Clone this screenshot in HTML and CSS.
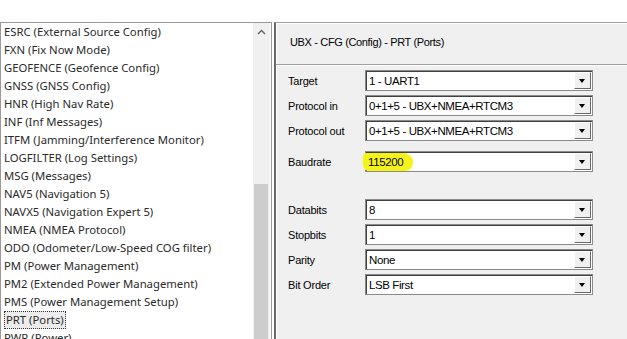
FILE: index.html
```html
<!DOCTYPE html>
<html lang="en">
<head>
  <meta charset="UTF-8" />
  <title>u-center - UBX CFG PRT</title>
  <link rel="stylesheet" href="styles.css">
</head>
<body>
  <div class="app">
    <div class="msglist">
      <ul class="items">
        <li>ESRC (External Source Config)</li>
        <li>FXN (Fix Now Mode)</li>
        <li>GEOFENCE (Geofence Config)</li>
        <li>GNSS (GNSS Config)</li>
        <li>HNR (High Nav Rate)</li>
        <li>INF (Inf Messages)</li>
        <li>ITFM (Jamming/Interference Monitor)</li>
        <li>LOGFILTER (Log Settings)</li>
        <li>MSG (Messages)</li>
        <li>NAV5 (Navigation 5)</li>
        <li>NAVX5 (Navigation Expert 5)</li>
        <li>NMEA (NMEA Protocol)</li>
        <li>ODO (Odometer/Low-Speed COG filter)</li>
        <li>PM (Power Management)</li>
        <li>PM2 (Extended Power Management)</li>
        <li>PMS (Power Management Setup)</li>
        <li><span class="selected">PRT (Ports)</span></li>
        <li>PWR (Power)</li>
      </ul>
      <div class="scrollbar">
        <div class="arrow-up">
          <svg width="9" height="6" viewBox="0 0 9 6"><polyline points="1,5 4.5,1.5 8,5" fill="none" stroke="#606060" stroke-width="1.4"/></svg>
        </div>
        <div class="thumb"></div>
      </div>
    </div>

    <div class="panel">
      <div class="panel-title">UBX - CFG (Config) - PRT (Ports)</div>
      <div class="form">
        <div class="row">
          <label>Target</label>
          <div class="combo"><span class="value">1 - UART1</span><span class="drop"></span></div>
        </div>
        <div class="row">
          <label>Protocol in</label>
          <div class="combo"><span class="value">0+1+5 - UBX+NMEA+RTCM3</span><span class="drop"></span></div>
        </div>
        <div class="row">
          <label>Protocol out</label>
          <div class="combo"><span class="value">0+1+5 - UBX+NMEA+RTCM3</span><span class="drop"></span></div>
        </div>
        <div class="row baud">
          <label>Baudrate</label>
          <div class="combo"><span class="value"><span class="marker">115200</span></span><span class="drop"></span></div>
        </div>
        <div class="row databits">
          <label>Databits</label>
          <div class="combo"><span class="value">8</span><span class="drop"></span></div>
        </div>
        <div class="row">
          <label>Stopbits</label>
          <div class="combo"><span class="value">1</span><span class="drop"></span></div>
        </div>
        <div class="row">
          <label>Parity</label>
          <div class="combo"><span class="value">None</span><span class="drop"></span></div>
        </div>
        <div class="row">
          <label>Bit Order</label>
          <div class="combo"><span class="value">LSB First</span><span class="drop"></span></div>
        </div>
      </div>
    </div>
  </div>
</body>
</html>
```

FILE: styles.css
```css
* {
  margin: 0;
  padding: 0;
  box-sizing: border-box;
}

html, body {
  width: 627px;
  height: 339px;
  overflow: hidden;
  background-color: #ffffff;
}

.app {
  display: flex;
  padding-top: 22px;
  height: 100%;
  overflow: hidden;
}

/* left message list */
.msglist {
  width: 272px;
  height: 317px;
  display: flex;
  border: 1px solid #9a9a9a;
  border-bottom: none;
  background: #ffffff;
  overflow: hidden;
}

.items {
  list-style: none;
  flex: 1;
  padding-left: 3px;
  font-family: "Noto Sans", sans-serif;
  font-size: 11.3px;
  color: #2a2a2a;
}

.items li {
  height: 18px;
  line-height: 18px;
  white-space: nowrap;
}

.items .selected {
  display: inline-block;
  height: 18px;
  padding: 0 1px;
  background: #ececec;
  border: 1px dotted #333;
  line-height: 16px;
}

.scrollbar {
  width: 17px;
  margin-right: 1px;
  background: #f0f0f0;
  display: flex;
  flex-direction: column;
}

.arrow-up {
  height: 17px;
  display: flex;
  justify-content: center;
  align-items: center;
}

.thumb {
  margin-top: 144px;
  margin-left: 1px;
  margin-right: 2px;
  flex: 1;
  background: #cdcdcd;
}

/* right config panel */
.panel {
  flex: 1;
  margin-left: 2px;
  height: 317px;
  background: #f0f0f0;
  border-top: 1px solid #a0a0a0;
  border-left: 2px solid #6a6a6a;
  box-shadow: inset 1px 1px 0 #ffffff;
  font-family: "Liberation Sans", Arial, sans-serif;
  font-size: 11px;
  color: #000;
}

.panel-title {
  height: 42px;
  padding: 13px 0 0 14px;
  border-bottom: 1px solid #a0a0a0;
  box-shadow: 0 1px 0 #ffffff;
  letter-spacing: -0.35px;
}

.form {
  padding: 5px 0 0 11px;
  display: flex;
  flex-direction: column;
  gap: 4px;
}

.row {
  display: flex;
  align-items: center;
  height: 21px;
}

.row.baud {
  margin-top: 6px;
}

.row.databits {
  margin-top: 23px;
}

.row label {
  width: 78px;
  padding-left: 1px;
  letter-spacing: -0.2px;
}

.combo {
  width: 228px;
  height: 21px;
  display: flex;
  align-items: center;
  background: #ffffff;
  border: 1px solid #8a8a8a;
  box-shadow: inset 1px 1px 0 #404040;
}

.combo .value {
  flex: 1;
  padding-left: 3px;
  font-size: 11.5px;
  letter-spacing: -0.4px;
  white-space: nowrap;
}

.marker {
  display: inline-block;
  margin-left: -6px;
  padding: 3px 10px 3px 5px;
  background: #f4f41c;
  border-radius: 4px 9px 8px 6px;
}

.drop {
  width: 17px;
  height: 17px;
  margin-right: 1px;
  background: #f0f0f0;
  border: 1px solid;
  border-color: #ffffff #6a6a6a #6a6a6a #ffffff;
  position: relative;
}

.drop::after {
  content: "";
  position: absolute;
  left: 4px;
  top: 6px;
  border-left: 3.5px solid transparent;
  border-right: 3.5px solid transparent;
  border-top: 4px solid #000;
}
```
